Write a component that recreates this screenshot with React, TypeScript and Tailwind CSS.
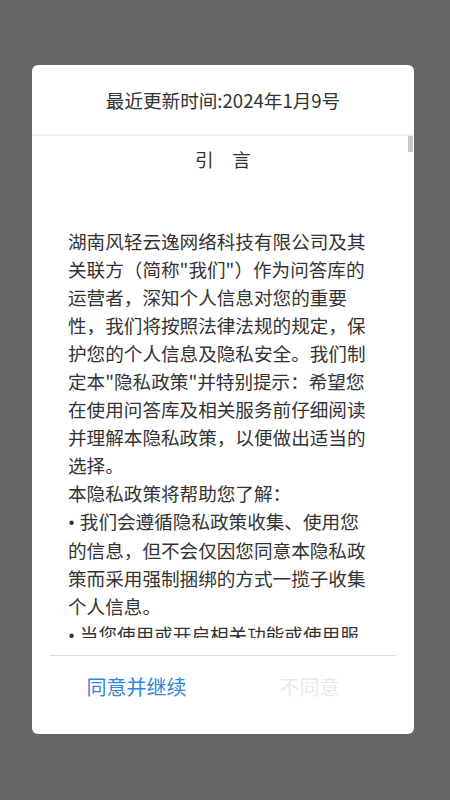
import React from 'react';

const font = "font-['Noto_Sans_CJK_SC',_'Noto_Sans',_sans-serif]";

// small latin bullet, so it doesn't take a full CJK cell
const Dot = () => <span className="font-['Noto_Sans',_sans-serif]">• </span>;

export default function App() {
  return (
    <div className={`min-h-screen bg-[#666666] pt-[65px] pl-[32px] ${font}`}>
      <div className="w-[382px] h-[669px] bg-white rounded-[6px] flex flex-col overflow-hidden">
        {/* header */}
        <div className="h-[69px] flex items-center justify-center text-[18.6px] text-[#333333]">
          最近更新时间:2024年1月9号
        </div>
        <div className="h-[2px] bg-[#f2f2f2]" />

        {/* scrolling policy text */}
        <div className="relative h-[502px] overflow-hidden">
          <div className="absolute right-[1px] top-0 w-[5px] h-[16px] bg-[#c9c9c9]" />
          <div className="pl-9 pr-[42px] pt-[9px] text-[18.6px] leading-[28px] text-[#333333]">
            <p className="text-center pl-[6px]">引　言</p>
            <p className="mt-[54px]">
              湖南风轻云逸网络科技有限公司及其关联方（简称"我们"）作为问答库的运营者，深知个人信息对您的重要性，我们将按照法律法规的规定，保护您的个人信息及隐私安全。我们制定本"隐私政策"并特别提示：希望您在使用问答库及相关服务前仔细阅读并理解本隐私政策，以便做出适当的选择。
            </p>
            <p>本隐私政策将帮助您了解：</p>
            <p><Dot />我们会遵循隐私政策收集、使用您的信息，但不会仅因您同意本隐私政策而采用强制捆绑的方式一揽子收集个人信息。</p>
            <p><Dot />当您使用或开启相关功能或使用服</p>
          </div>
        </div>

        {/* actions */}
        <div className="mt-[17px] mx-[18px] h-px bg-[#dddddd]" />
        <div className="mx-[18px] h-[62px] grid grid-cols-2 items-center text-[20px]">
          <button className="text-[#2f86d8] text-center">同意并继续</button>
          <button className="text-[#e9e9e9] text-center">不同意</button>
        </div>
      </div>
    </div>
  );
}
